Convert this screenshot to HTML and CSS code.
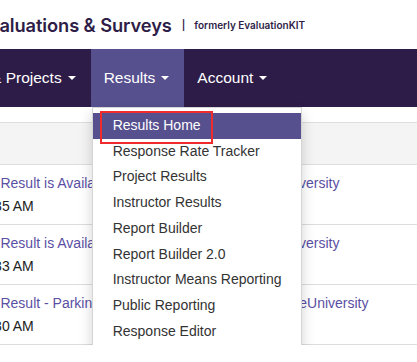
FILE: index.html
```html
<!DOCTYPE html>
<html lang="en">
<head>
    <meta charset="UTF-8">
    <title>Results</title>
    <link rel="stylesheet" href="styles.css">
</head>
<body>
    <header class="brand">
        <span class="brand-title">Evaluations &amp; Surveys</span>
        <span class="brand-sep">|</span>
        <span class="brand-sub">formerly EvaluationKIT</span>
    </header>

    <nav class="topnav">
        <a class="nav-item first">Courses &amp; Projects <span class="caret"></span></a>
        <div class="nav-wrap">
            <a class="nav-item active">Results <span class="caret"></span></a>
            <ul class="dropdown">
                <li class="selected">Results Home</li>
                <li>Response Rate Tracker</li>
                <li>Project Results</li>
                <li>Instructor Results</li>
                <li>Report Builder</li>
                <li>Report Builder 2.0</li>
                <li>Instructor Means Reporting</li>
                <li>Public Reporting</li>
                <li>Response Editor</li>
                <li>Survey Opt-Out Reporting</li>
            </ul>
        </div>
        <a class="nav-item">Account <span class="caret"></span></a>
    </nav>

    <div class="notices">
        <div class="notice-head"></div>
        <div class="notice">
            <a class="notice-link">Survey Result is Available - Fall Evaluation - SampleUniversity</a>
            <div class="notice-time">1/12/2024 10:14:35 AM</div>
        </div>
        <div class="notice">
            <a class="notice-link">Survey Result is Available - Fall Evaluation - SampleUniversity</a>
            <div class="notice-time">1/12/2024 10:14:33 AM</div>
        </div>
        <div class="notice">
            <a class="notice-link">Survey Result - Parking Services Surveys 2023 - SampleUniversity</a>
            <div class="notice-time">1/12/2024 10:14:30 AM</div>
        </div>
    </div>
</body>
</html>
```

FILE: styles.css
```css
* { box-sizing: border-box; }
body { margin: 0; font-family: "Liberation Sans", Arial, sans-serif; overflow: hidden; background: #fff; }

.brand { height: 49px; display: flex; align-items: center; white-space: nowrap; color: #2e1d47; font-family: Inter, sans-serif; font-weight: 600; }
.brand-title { margin-left: -22px; font-size: 18.3px; letter-spacing: -0.1px; }
.brand-sep { margin-left: 10px; font-size: 10px; }
.brand-sub { margin-left: 9px; font-size: 10px; }

.topnav { height: 58px; background: #2e1c48; display: flex; white-space: nowrap; }
.nav-item { display: flex; align-items: center; height: 58px; padding: 0 15px 0 13px; color: #fff; font-size: 15.5px; }
.nav-item.first { margin-left: -84px; }
.nav-item.active { background: #57508f; }
.caret { display: inline-block; margin-left: 6px; border-top: 4px solid #fff; border-left: 4px solid transparent; border-right: 4px solid transparent; }
.nav-wrap { position: relative; }

.dropdown { position: absolute; top: 58px; left: 1px; width: 210px; margin: 0; padding: 5px 0; list-style: none; background: #fff; border: 1px solid #d5d5d5; box-shadow: 0 6px 12px rgba(0, 0, 0, 0.18); z-index: 2; }
.dropdown li { position: relative; padding: 3px 0 3px 20px; line-height: 19.7px; font-size: 14px; color: #333; white-space: nowrap; }
.dropdown li.selected { background: #57508f; color: #fff; }
.dropdown li.selected::after { content: ""; position: absolute; top: -2px; bottom: -5px; left: 7px; width: 109px; border: 2px solid #ef2b2b; }

.notices { margin-top: 15px; }
.notice-head { height: 43px; background: #f4f4f4; border-top: 1px solid #ddd; border-bottom: 1px solid #ddd; }
.notice { height: 60px; padding-top: 10px; border-bottom: 1px solid #ddd; white-space: nowrap; font-size: 14px; }
.notice-link { display: block; margin-left: -47px; color: #5a4fa3; }
.notice-time { margin-top: 7px; margin-left: -111px; color: #222; }
```
